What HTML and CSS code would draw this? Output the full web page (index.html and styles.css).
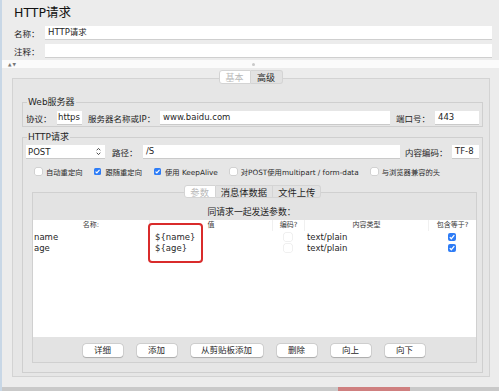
FILE: index.html
```html
<!DOCTYPE html>
<html lang="zh">
<head>
<meta charset="utf-8">
<title>HTTP请求</title>
<link rel="stylesheet" href="styles.css">
</head>
<body>
<div class="window">
  <h1 class="title">HTTP请求</h1>
  <div class="field-row"><span class="field-label">名称：</span><div class="input">HTTP请求</div></div>
  <div class="field-row"><span class="field-label">注释：</span><div class="input"></div></div>
  <div class="splitter"><span class="arrows">▲▼</span><span class="grip"></span><span></span></div>
  <div class="tabs main-tabs"><span class="tab active">基本</span><span class="tab">高级</span></div>
  <div class="tab-panel">
    <fieldset class="group">
      <legend>Web服务器</legend>
      <div class="line">
        <span class="lbl w-proto">协议：</span>
        <div class="input proto">https</div>
        <span class="lbl w-server">服务器名称或IP：</span>
        <div class="input grow">www.baidu.com</div>
        <span class="lbl w-port">端口号：</span>
        <div class="input port">443</div>
      </div>
    </fieldset>
    <fieldset class="group">
      <legend>HTTP请求</legend>
      <div class="line">
        <div class="select">POST<svg width="5" height="9" viewBox="0 0 5 9"><path d="M0.7 3.3 L2.5 1.4 L4.3 3.3 M0.7 5.7 L2.5 7.6 L4.3 5.7" stroke="#3a3a3a" stroke-width="0.9" fill="none"/></svg></div>
        <span class="lbl w-path">路径：</span>
        <div class="input grow">/S</div>
        <span class="lbl w-enc">内容编码：</span>
        <div class="input enc">TF-8</div>
      </div>
      <div class="checks">
        <label class="check"><span class="box"></span>自动重定向</label>
        <label class="check"><span class="box on"><svg viewBox="0 0 8 8"><path d="M1.8 4.1 L3.3 5.7 L6.3 2.2" stroke="#fff" stroke-width="1.3" fill="none"/></svg></span>跟随重定向</label>
        <label class="check"><span class="box on"><svg viewBox="0 0 8 8"><path d="M1.8 4.1 L3.3 5.7 L6.3 2.2" stroke="#fff" stroke-width="1.3" fill="none"/></svg></span>使用 KeepAlive</label>
        <label class="check"><span class="box"></span>对POST使用multipart / form-data</label>
        <label class="check"><span class="box"></span>与浏览器兼容的头</label>
      </div>
      <div class="tabs sub-tabs"><span class="tab active">参数</span><span class="tab">消息体数据</span><span class="tab">文件上传</span></div>
      <div class="params">
        <div class="params-title">同请求一起发送参数：</div>
        <div class="table">
          <div class="trow thead">
            <span>名称:</span><span>值</span><span>编码?</span><span>内容类型</span><span>包含等于?</span>
          </div>
          <div class="trow">
            <span class="c-name">name</span><span class="c-val">${name}</span><span class="c-cb"><span class="box off"></span></span><span class="c-type">text/plain</span><span class="c-cb"><span class="box on big"><svg viewBox="0 0 8 8"><path d="M1.8 4.1 L3.3 5.7 L6.3 2.2" stroke="#fff" stroke-width="1.3" fill="none"/></svg></span></span>
          </div>
          <div class="trow">
            <span class="c-name">age</span><span class="c-val">${age}</span><span class="c-cb"><span class="box off"></span></span><span class="c-type">text/plain</span><span class="c-cb"><span class="box on big"><svg viewBox="0 0 8 8"><path d="M1.8 4.1 L3.3 5.7 L6.3 2.2" stroke="#fff" stroke-width="1.3" fill="none"/></svg></span></span>
          </div>
          <div class="annot"></div>
        </div>
        <div class="buttons">
          <span class="btn">详细</span>
          <span class="btn">添加</span>
          <span class="btn wide">从剪贴板添加</span>
          <span class="btn">删除</span>
          <span class="btn">向上</span>
          <span class="btn">向下</span>
        </div>
      </div>
    </fieldset>
  </div>
  <div class="bottom-bar"><span class="bar-red"></span></div>
</div>
</body>
</html>
```

FILE: styles.css
```css
* { box-sizing: border-box; }
html, body { margin: 0; padding: 0; }
body {
  width: 499px;
  height: 391px;
  overflow: hidden;
  background: #ececec;
  font-family: "DejaVu Sans", "Noto Sans CJK SC", sans-serif;
  font-size: 8.5px;
  color: #1f1f1f;
}
.window {
  height: 391px;
  border-left: 2px solid #c8d7e6;
  display: flex;
  flex-direction: column;
}
.title {
  margin: 4px 0 0 12px;
  height: 18px;
  line-height: 18px;
  font-size: 12.5px;
  font-weight: normal;
  color: #111;
}
.field-row {
  display: flex;
  align-items: center;
  height: 13px;
  margin: 4px 7px 0 12px;
}
.field-row + .field-row { margin-top: 5px; }
.field-label { width: 31px; white-space: nowrap; }
.input {
  background: #fff;
  height: 13px;
  line-height: 13px;
  padding: 0 3px;
  white-space: nowrap;
  overflow: hidden;
  box-shadow: 0 0.5px 0.5px rgba(0,0,0,0.12);
}
.field-row .input { flex: 1; }
.splitter {
  margin-top: 3px;
  height: 8px;
  background: #fbfbfb;
  display: grid;
  grid-template-columns: 1fr auto 1fr;
  align-items: center;
}
.arrows {
  font-size: 4.5px;
  color: #777;
  padding-left: 6px;
  letter-spacing: 1px;
}
.grip {
  width: 3px;
  height: 3px;
  border-radius: 50%;
  background: #c9c9c9;
  margin-left: 5px;
}
.tabs {
  display: flex;
  justify-content: center;
  position: relative;
  z-index: 1;
}
.tab {
  height: 14px;
  line-height: 14px;
  padding: 0 6px;
  background: #e2e2e2;
  color: #1f1f1f;
  border: 0.5px solid #d4d4d4;
  border-left: none;
}
.tab:first-child { border-left: 0.5px solid #d4d4d4; border-radius: 3px 0 0 3px; }
.tab:last-child { border-radius: 0 3px 3px 0; }
.tab.active { background: #fff; color: #b9b9b9; }
.main-tabs { margin-top: 2px; font-size: 9px; }
.main-tabs .tab { width: 32px; text-align: center; padding: 0; }
.tab-panel {
  margin: -6px 9px 0 10px;
  background: #e6e6e6;
  border: 1px solid #d3d3d3;
  padding: 17px 6px 3px 9px;
}
.group {
  margin: 0;
  padding: 0 3px;
  border: 1px solid #cfcfcf;
  min-width: 0;
}
.group + .group { margin-top: 4px; padding-bottom: 9px; }
.group:first-child { padding-bottom: 2px; }
legend {
  padding: 0 1px;
  margin-left: 1px;
  height: 12px;
  line-height: 12px;
  font-size: 9px;
  color: #1f1f1f;
}
.line {
  display: flex;
  align-items: center;
  height: 13px;
  margin-top: 2px;
}
.group:first-child .line { margin-top: 3px; }
.lbl { white-space: nowrap; }
.w-proto { width: 31px; }
.proto { width: 25px; padding: 0 1px; }
.w-server { width: 72px; margin-left: 6px; }
.grow { flex: 1; }
.w-port { width: 39px; margin-left: 6px; }
.port { width: 44px; }
.select {
  width: 79px;
  height: 13px;
  background: #fff;
  display: flex;
  align-items: center;
  justify-content: space-between;
  padding: 0 4px 0 2px;
  box-shadow: 0 0.5px 0.5px rgba(0,0,0,0.12);
}
.w-path { width: 31px; margin-left: 7px; }
.w-enc { width: 47px; margin-left: 5px; }
.enc { width: 27px; }
.checks {
  display: flex;
  align-items: center;
  gap: 12px;
  height: 9px;
  margin-top: 9px;
  padding-left: 9px;
  font-size: 7.3px;
  color: #2a2a2a;
}
.check { display: flex; align-items: center; gap: 4px; white-space: nowrap; }
.box {
  width: 7px;
  height: 7px;
  border-radius: 1.5px;
  background: #fff;
  box-shadow: 0 0 0 0.5px #bdbdbd;
  display: inline-flex;
}
.box.on { background: #2e7cf6; box-shadow: none; }
.box svg { width: 100%; height: 100%; }
.box.off { width: 8px; height: 8px; box-shadow: 0 0 0 0.5px #e2e2e2; }
.box.big { width: 8px; height: 8px; border-radius: 2px; }
.sub-tabs { margin-top: 9px; font-size: 9.3px; }
.sub-tabs .tab { height: 13px; line-height: 13px; padding: 0 5px; }
.sub-tabs .tab.active { width: 32px; text-align: center; padding: 0; }
.params {
  margin: -6px 2px 0 6px;
  background: #e3e3e3;
  border: 1px solid #d0d0d0;
  padding: 13px 0 5px;
}
.params-title {
  height: 13px;
  line-height: 13px;
  text-align: center;
  font-size: 8.8px;
  padding-right: 6px;
}
.table {
  position: relative;
  margin-top: 1px;
  height: 117px;
  background: #fff;
}
.trow {
  display: grid;
  grid-template-columns: 116px 123px 32px 124px 48px;
  height: 11px;
  align-items: center;
  white-space: nowrap;
}
.thead {
  font-size: 7px;
  color: #3a3a3a;
  text-align: center;
}
.thead span { height: 11px; line-height: 11px; border-left: 1px solid #f0f0f0; }
.thead span:first-child { border-left: none; }
.c-name { padding-left: 1px; }
.c-val { padding-left: 6px; }
.c-cb { display: flex; justify-content: center; }
.c-type { padding-left: 3px; }
.annot {
  position: absolute;
  left: 115px;
  top: 3px;
  width: 55px;
  height: 40px;
  border: 2px solid #d92b2b;
  border-radius: 4px;
}
.buttons {
  display: flex;
  justify-content: center;
  gap: 14px;
  margin-top: 7px;
  padding-right: 2px;
}
.btn {
  width: 40px;
  height: 13px;
  line-height: 13px;
  text-align: center;
  background: #fff;
  border-radius: 3px;
  box-shadow: 0 0 0 0.5px rgba(0,0,0,0.15), 0 0.5px 1px rgba(0,0,0,0.18);
  font-size: 8.5px;
}
.btn.wide { width: 72px; }
.bottom-bar {
  margin-top: auto;
  height: 4px;
  background: #c9c9c9;
  display: flex;
  padding-left: 336px;
}
.bar-red { width: 72px; background: #cf8080; }
```
